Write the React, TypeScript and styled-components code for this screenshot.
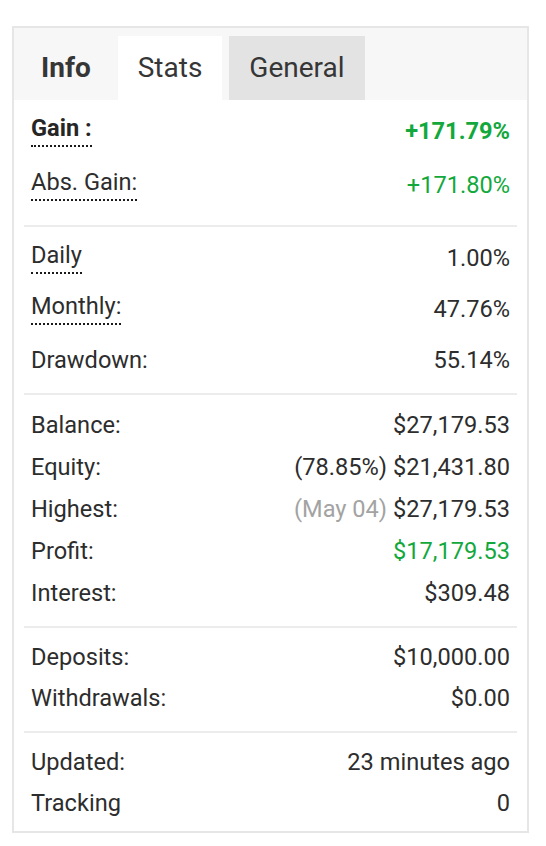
import React from 'react';
import styled, { createGlobalStyle } from 'styled-components';

type Tone = 'plain' | 'green';

type StatRow = {
  label: string;
  value: string;
  note?: string;
  noteMuted?: boolean;
  tone?: Tone;
  bold?: boolean;
  dotted?: boolean;
};

type StatGroup = {
  rowHeight: number;
  padTop: number;
  padBottom: number;
  rows: StatRow[];
};

const tabs = [
  { id: 'info', label: 'Info', variant: 'bare' as const },
  { id: 'stats', label: 'Stats', variant: 'active' as const },
  { id: 'general', label: 'General', variant: 'muted' as const },
];

const groups: StatGroup[] = [
  {
    rowHeight: 54,
    padTop: 4,
    padBottom: 13,
    rows: [
      { label: 'Gain :', value: '+171.79%', tone: 'green', bold: true, dotted: true },
      { label: 'Abs. Gain:', value: '+171.80%', tone: 'green', dotted: true },
    ],
  },
  {
    rowHeight: 51,
    padTop: 5,
    padBottom: 8,
    rows: [
      { label: 'Daily', value: '1.00%', dotted: true },
      { label: 'Monthly:', value: '47.76%', dotted: true },
      { label: 'Drawdown:', value: '55.14%' },
    ],
  },
  {
    rowHeight: 42,
    padTop: 9,
    padBottom: 12,
    rows: [
      { label: 'Balance:', value: '$27,179.53' },
      { label: 'Equity:', value: '$21,431.80', note: '(78.85%)' },
      { label: 'Highest:', value: '$27,179.53', note: '(May 04)', noteMuted: true },
      { label: 'Profit:', value: '$17,179.53', tone: 'green' },
      { label: 'Interest:', value: '$309.48' },
    ],
  },
  {
    rowHeight: 41,
    padTop: 8,
    padBottom: 13,
    rows: [
      { label: 'Deposits:', value: '$10,000.00' },
      { label: 'Withdrawals:', value: '$0.00' },
    ],
  },
  {
    rowHeight: 41,
    padTop: 8,
    padBottom: 8,
    rows: [
      { label: 'Updated:', value: '23 minutes ago' },
      { label: 'Tracking', value: '0' },
    ],
  },
];

const App: React.FC = (): JSX.Element => {
  return (
    <>
      <GlobalStyle />
      <Card>
        <TabBar>
          {tabs.map((tab) => (
            <Tab key={tab.id} $variant={tab.variant}>
              {tab.label}
            </Tab>
          ))}
        </TabBar>
        {groups.map((group, i) => (
          <Group
            key={i}
            $padTop={group.padTop}
            $padBottom={group.padBottom}
            $last={i === groups.length - 1}>
            {group.rows.map((row) => (
              <Row key={row.label} $height={group.rowHeight}>
                <Label $bold={row.bold} $dotted={row.dotted}>
                  {row.label}
                </Label>
                <Value $tone={row.tone ?? 'plain'} $bold={row.bold}>
                  {row.note && <Note $muted={row.noteMuted}>{row.note}</Note>}
                  {row.value}
                </Value>
              </Row>
            ))}
          </Group>
        ))}
      </Card>
    </>
  );
};

const GlobalStyle = createGlobalStyle`
  body {
    margin: 0;
    background: #ffffff;
    font-family: Roboto, 'Liberation Sans', sans-serif;
    color: #2d2d2d;
  }
`;

const Card = styled.div`
  box-sizing: border-box;
  margin: 26px 0 0 12px;
  width: 517px;
  border: 2px solid #e6e6e6;
  background: #ffffff;
`;

const TabBar = styled.div`
  display: flex;
  align-items: flex-end;
  column-gap: 7px;
  height: 72px;
  padding-left: 7px;
  background: #f7f7f7;
`;

const Tab = styled.div<{ $variant: 'bare' | 'active' | 'muted' }>`
  height: 64px;
  line-height: 64px;
  padding: 0 20px;
  font-size: 28px;
  color: #363636;
  font-weight: ${({ $variant }) => ($variant === 'bare' ? 700 : 400)};
  background: ${({ $variant }) =>
    $variant === 'active' ? '#ffffff' : $variant === 'muted' ? '#e3e3e3' : 'transparent'};
`;

const Group = styled.section<{ $padTop: number; $padBottom: number; $last: boolean }>`
  margin: 0 10px;
  padding: ${({ $padTop, $padBottom }) => `${$padTop}px 7px ${$padBottom}px`};
  border-bottom: ${({ $last }) => ($last ? 'none' : '2px solid #ececec')};
`;

const Row = styled.div<{ $height: number }>`
  display: flex;
  justify-content: space-between;
  align-items: center;
  height: ${({ $height }) => $height}px;
  font-size: 23.6px;
`;

const Label = styled.span<{ $bold?: boolean; $dotted?: boolean }>`
  display: inline-block;
  line-height: 26px;
  font-weight: ${({ $bold }) => ($bold ? 700 : 400)};
  color: ${({ $bold }) => ($bold ? '#262626' : '#2d2d2d')};
  padding-bottom: ${({ $dotted }) => ($dotted ? '4px' : '0')};
  border-bottom: ${({ $dotted }) => ($dotted ? '2px dotted #1a1a1a' : 'none')};
`;

const Value = styled.span<{ $tone: Tone; $bold?: boolean }>`
  line-height: 26px;
  font-weight: ${({ $bold }) => ($bold ? 700 : 400)};
  color: ${({ $tone }) => ($tone === 'green' ? '#12a83c' : '#2d2d2d')};
`;

const Note = styled.span<{ $muted?: boolean }>`
  margin-right: 6px;
  color: ${({ $muted }) => ($muted ? '#a3a3a3' : '#2d2d2d')};
`;

export default App;
